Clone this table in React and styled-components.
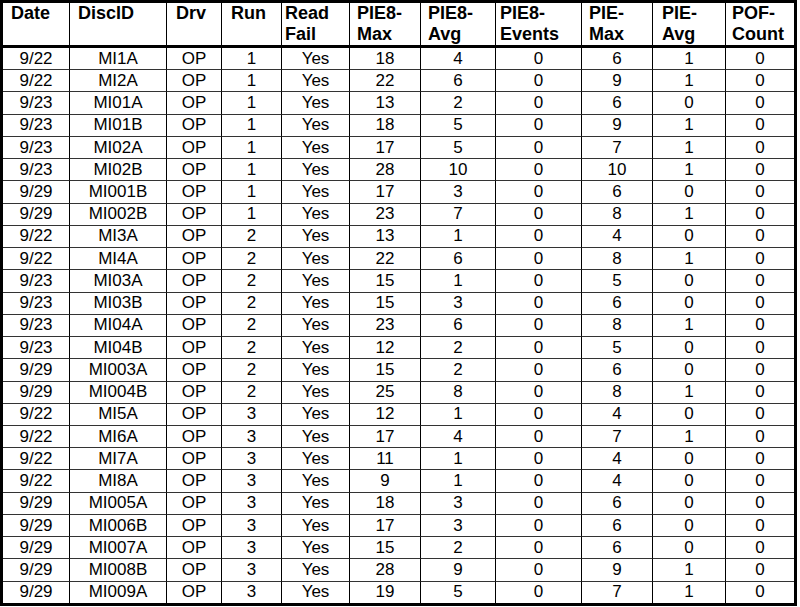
import React from 'react';
import styled, { createGlobalStyle } from 'styled-components';

const GlobalStyle = createGlobalStyle`
  html, body {
    margin: 0;
    padding: 0;
    background: #fff;
  }
`;

const Table = styled.table`
  border-collapse: separate;
  border-spacing: 0;
  table-layout: fixed;
  width: 797px;
  border: 3px solid #000;
  font-family: 'Liberation Sans', Arial, sans-serif;
  color: #000;
  background: #fff;
`;

const Head = styled.th`
  height: 41px;
  padding: 0 0 0 ${p => p.indent}px;
  text-align: left;
  vertical-align: top;
  font-size: 18px;
  font-weight: bold;
  line-height: 21px;
  border-bottom: 3px solid #000;
  border-right: ${p => (p.last ? 'none' : '1px solid #000')};
  overflow: hidden;
  white-space: nowrap;
`;

const Cell = styled.td`
  height: 21.24px;
  padding: 0;
  text-align: center;
  vertical-align: middle;
  font-size: 17px;
  line-height: 18px;
  border-bottom: ${p => (p.bottom ? 'none' : '1px solid #333')};
  border-right: ${p => (p.last ? 'none' : '1px solid #000')};
  white-space: nowrap;
`;

const columns = [
  { width: 67, indent: 8, label: ['Date'] },
  { width: 97, indent: 8, label: ['DiscID'] },
  { width: 55, indent: 9, label: ['Drv'] },
  { width: 60, indent: 9, label: ['Run'] },
  { width: 68, indent: 3, label: ['Read', 'Fail'] },
  { width: 71, indent: 7, label: ['PIE8-', 'Max'] },
  { width: 75, indent: 7, label: ['PIE8-', 'Avg'] },
  { width: 86, indent: 4, label: ['PIE8-', 'Events'] },
  { width: 71, indent: 7, label: ['PIE-', 'Max'] },
  { width: 73, indent: 9, label: ['PIE-', 'Avg'] },
  { width: 68, indent: 6, label: ['POF-', 'Count'] },
];

const rows = [
  ['9/22', 'MI1A', 'OP', 1, 'Yes', 18, 4, 0, 6, 1, 0],
  ['9/22', 'MI2A', 'OP', 1, 'Yes', 22, 6, 0, 9, 1, 0],
  ['9/23', 'MI01A', 'OP', 1, 'Yes', 13, 2, 0, 6, 0, 0],
  ['9/23', 'MI01B', 'OP', 1, 'Yes', 18, 5, 0, 9, 1, 0],
  ['9/23', 'MI02A', 'OP', 1, 'Yes', 17, 5, 0, 7, 1, 0],
  ['9/23', 'MI02B', 'OP', 1, 'Yes', 28, 10, 0, 10, 1, 0],
  ['9/29', 'MI001B', 'OP', 1, 'Yes', 17, 3, 0, 6, 0, 0],
  ['9/29', 'MI002B', 'OP', 1, 'Yes', 23, 7, 0, 8, 1, 0],
  ['9/22', 'MI3A', 'OP', 2, 'Yes', 13, 1, 0, 4, 0, 0],
  ['9/22', 'MI4A', 'OP', 2, 'Yes', 22, 6, 0, 8, 1, 0],
  ['9/23', 'MI03A', 'OP', 2, 'Yes', 15, 1, 0, 5, 0, 0],
  ['9/23', 'MI03B', 'OP', 2, 'Yes', 15, 3, 0, 6, 0, 0],
  ['9/23', 'MI04A', 'OP', 2, 'Yes', 23, 6, 0, 8, 1, 0],
  ['9/23', 'MI04B', 'OP', 2, 'Yes', 12, 2, 0, 5, 0, 0],
  ['9/29', 'MI003A', 'OP', 2, 'Yes', 15, 2, 0, 6, 0, 0],
  ['9/29', 'MI004B', 'OP', 2, 'Yes', 25, 8, 0, 8, 1, 0],
  ['9/22', 'MI5A', 'OP', 3, 'Yes', 12, 1, 0, 4, 0, 0],
  ['9/22', 'MI6A', 'OP', 3, 'Yes', 17, 4, 0, 7, 1, 0],
  ['9/22', 'MI7A', 'OP', 3, 'Yes', 11, 1, 0, 4, 0, 0],
  ['9/22', 'MI8A', 'OP', 3, 'Yes', 9, 1, 0, 4, 0, 0],
  ['9/29', 'MI005A', 'OP', 3, 'Yes', 18, 3, 0, 6, 0, 0],
  ['9/29', 'MI006B', 'OP', 3, 'Yes', 17, 3, 0, 6, 0, 0],
  ['9/29', 'MI007A', 'OP', 3, 'Yes', 15, 2, 0, 6, 0, 0],
  ['9/29', 'MI008B', 'OP', 3, 'Yes', 28, 9, 0, 9, 1, 0],
  ['9/29', 'MI009A', 'OP', 3, 'Yes', 19, 5, 0, 7, 1, 0],
];

export default function App() {
  const lastCol = columns.length - 1;
  return (
    <>
      <GlobalStyle />
      <Table>
        <colgroup>
          {columns.map((c, i) => <col key={i} style={{ width: c.width }} />)}
        </colgroup>
        <thead>
          <tr>
            {columns.map((c, i) => (
              <Head key={i} indent={c.indent} last={i === lastCol}>
                {c.label[0]}
                {c.label[1] && <><br />{c.label[1]}</>}
              </Head>
            ))}
          </tr>
        </thead>
        <tbody>
          {rows.map((r, ri) => (
            <tr key={ri}>
              {r.map((v, ci) => (
                <Cell key={ci} last={ci === lastCol} bottom={ri === rows.length - 1}>{v}</Cell>
              ))}
            </tr>
          ))}
        </tbody>
      </Table>
    </>
  );
}
